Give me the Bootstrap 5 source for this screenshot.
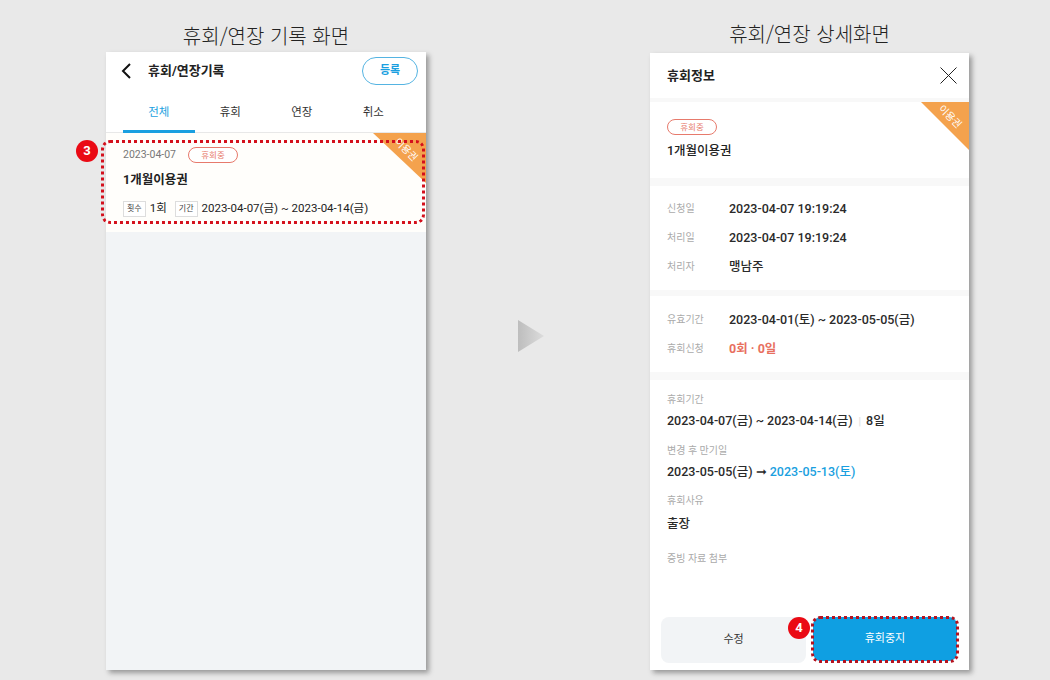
<!DOCTYPE html>
<html lang="ko">
<head>
    <meta charset="UTF-8">
    <meta name="viewport" content="width=device-width, initial-scale=1.0">
    <title>휴회/연장 화면</title>
    <link href="https://cdn.jsdelivr.net/npm/bootstrap@5.3.0/dist/css/bootstrap.min.css" rel="stylesheet">
    <style>
        html, body { height: 680px; overflow: hidden; }
        body { background: #e9e9e9; color: #222; font-family: Roboto, "Noto Sans CJK KR", sans-serif; font-size: 12px; }
        .stage { height: 680px; }
        .left-col { width: 320px; margin-left: 106px; }
        .arrow-col { width: 26px; margin-left: 92px; height: 680px; padding-top: 320px; }
        .right-col { width: 319px; margin-left: 106px; }
        .screen-title { font-family: "Noto Sans CJK KR", sans-serif; font-size: 20px; font-weight: 300; color: #222; text-align: center; line-height: 30px; white-space: nowrap; }
        .left-col .screen-title { height: 52px; padding-top: 21px; line-height: 30px; }
        .right-col .screen-title { height: 53px; padding-top: 19px; line-height: 30px; }
        .phone { background: #fff; box-shadow: 3px 3px 5px rgba(0,0,0,.35); position: relative; }
        .left-col .phone { height: 618px; background: #f2f4f6; }
        .right-col .phone { height: 617px; }

        .list-head { height: 38px; background: #fff; padding-left: 15px; padding-right: 8px; }
        .head-title { font-size: 13px; font-weight: 700; color: #222; margin-left: 17px; padding-top: 0; }
        .reg-btn { width: 56px; height: 28px; border: 1px solid #55b4e2; border-radius: 14px; color: #1a9fe0; font-size: 11px; font-weight: 700; background: #fff; padding: 0; }
        .tab-row { height: 43px; background: #fff; padding-left: 17px; padding-right: 17px; border-bottom: 1px solid #e8e8e8; }
        .tab-item { width: 71.5px; text-align: center; font-size: 11.5px; color: #333; line-height: 18px; padding-top: 13px; height: 43px; }
        .tab-item.on { color: #1a9fe0; border-bottom: 3px solid #1a9fe0; }
        .rec-card { height: 99px; background: #fffefb; padding: 14px 17px 0; position: relative; overflow: hidden; }
        .rec-date { font-size: 10.5px; color: #777; }
        .pill { display: inline-block; width: 50px; height: 16px; border: 1px solid #e77a6c; border-radius: 8px; color: #e77a6c; font-size: 8.5px; line-height: 14px; text-align: center; background: #fff; }
        .rec-name { font-size: 12.5px; font-weight: 700; margin-top: 8px; line-height: 18px; }
        .rec-meta { margin-top: 11px; font-size: 11.5px; }
        .tag-box { display: inline-block; height: 16px; line-height: 14px; border: 1px solid #ddd; color: #444; font-size: 8px; padding: 0 3px; background: #fff; }
        .ribbon { position: absolute; top: 0; right: 0; width: 53px; height: 50px; background: #f4a24d; clip-path: polygon(0 0, 100% 0, 100% 100%); }
        .ribbon-text { position: absolute; top: 10px; right: -2px; width: 44px; text-align: center; transform: rotate(45deg); color: #fff; font-size: 10px; line-height: 14px; }
        .dot-frame { position: absolute; left: -5px; top: 88px; width: 324px; height: 84px; border: 3px dotted #d4101c; border-radius: 9px; pointer-events: none; }
        .num-dot { position: absolute; width: 22px; height: 22px; border-radius: 50%; background: #ea0a14; color: #fff; font-size: 13px; font-weight: 700; line-height: 22px; text-align: center; }
        .num-three { left: -30px; top: 88px; }

        .detail-head { height: 45px; padding: 0 12px 0 17px; }
        .detail-title { font-size: 13px; font-weight: 700; }
        .gap-band { background: #f8f8f8; }
        .band-a { height: 4px; }
        .band-b { height: 8px; }
        .band-c { height: 6px; }
        .sec-one { height: 76px; padding: 17px 17px 0; position: relative; }
        .ribbon-big { width: 48px; height: 48px; }
        .ribbon-big .ribbon-text { top: 8px; right: -3px; }
        .sec-name { font-size: 12.5px; font-weight: 500; margin-top: 7px; line-height: 18px; }
        .sec-rows { padding: 0 17px; }
        .info-row { height: 29px; line-height: 29px; }
        .info-label { width: 62px; color: #aaa; font-size: 10px; flex: none; }
        .info-value { font-size: 12.5px; font-weight: 500; color: #2a2a2a; }
        .sec-two { height: 104px; padding-top: 8px; }
        .sec-three { height: 76px; padding-top: 9px; }
        .red-val { color: #e8705f; font-weight: 700; }
        .sec-four { height: 230px; padding: 11px 17px 0; }
        .stack-label { color: #aaa; font-size: 10px; line-height: 18px; }
        .stack-value { font-size: 12.5px; font-weight: 500; color: #2a2a2a; line-height: 20px; margin-top: 2px; margin-bottom: 10px; }
        .blue-val { color: #1a9fe0; }
        .bar-sep { color: #ddd; font-size: 10px; margin: 0 5px 0 6px; }
        .foot-btns { position: absolute; left: 11px; bottom: 7px; gap: 7px; }
        .btn-edit { width: 145px; height: 46px; background: #f2f4f6; border: 0; border-radius: 8px; font-size: 11px; color: #333; padding: 0; }
        .btn-stop { width: 144px; height: 44px; background: #0f9fe2; border: 0; border-radius: 8px; font-size: 11px; color: #fff; padding: 0; margin-right: 0; }
        .dot-frame-two { position: absolute; left: 161px; top: 563px; width: 148px; height: 47px; border: 3px dotted #b5121f; border-radius: 9px; pointer-events: none; }
        .num-four { left: 138px; top: 564px; }
    </style>
</head>
<body>
    <div class="stage d-flex align-items-start">
        <!-- 기록 화면 -->
        <div class="left-col">
            <div class="screen-title">휴회/연장 기록 화면</div>
            <div class="phone">
                <div class="list-head d-flex align-items-center">
                    <svg width="10" height="16" viewBox="0 0 10 16"><path d="M9 1 2 8l7 7" fill="none" stroke="#111" stroke-width="2"/></svg>
                    <div class="head-title">휴회/연장기록</div>
                    <button class="reg-btn ms-auto">등록</button>
                </div>
                <div class="tab-row d-flex">
                    <div class="tab-item on">전체</div>
                    <div class="tab-item">휴회</div>
                    <div class="tab-item">연장</div>
                    <div class="tab-item">취소</div>
                </div>
                <div class="rec-card">
                    <div class="d-flex align-items-center gap-2">
                        <span class="rec-date me-1">2023-04-07</span>
                        <span class="pill">휴회중</span>
                    </div>
                    <div class="rec-name">1개월이용권</div>
                    <div class="rec-meta d-flex align-items-center">
                        <span class="tag-box me-1">횟수</span>
                        <span>1회</span>
                        <span class="tag-box ms-2 me-1">기간</span>
                        <span>2023-04-07(금) ~ 2023-04-14(금)</span>
                    </div>
                    <div class="ribbon"><div class="ribbon-text">이용권</div></div>
                </div>
                <div class="dot-frame"></div>
                <div class="num-dot num-three">3</div>
            </div>
        </div>

        <div class="arrow-col">
            <svg width="26" height="32" viewBox="0 0 26 32">
                <defs>
                    <linearGradient id="arrowFill" x1="0" x2="1" y1="0" y2="0">
                        <stop offset="0" stop-color="#bdbdbd"/>
                        <stop offset="1" stop-color="#dcdcdc"/>
                    </linearGradient>
                </defs>
                <polygon points="0,0 26,16 0,32" fill="url(#arrowFill)"/>
            </svg>
        </div>

        <!-- 상세 화면 -->
        <div class="right-col">
            <div class="screen-title">휴회/연장 상세화면</div>
            <div class="phone">
                <div class="detail-head d-flex align-items-center justify-content-between">
                    <div class="detail-title">휴회정보</div>
                    <svg width="17" height="17" viewBox="0 0 17 17"><path d="M.5.5l16 16M16.500.5l-16 16" fill="none" stroke="#222" stroke-width="1"/></svg>
                </div>
                <div class="gap-band band-a"></div>
                <div class="sec-one">
                    <span class="pill d-block">휴회중</span>
                    <div class="sec-name">1개월이용권</div>
                    <div class="ribbon ribbon-big"><div class="ribbon-text">이용권</div></div>
                </div>
                <div class="gap-band band-b"></div>
                <div class="sec-rows sec-two">
                    <div class="info-row d-flex"><span class="info-label">신청일</span><span class="info-value">2023-04-07 19:19:24</span></div>
                    <div class="info-row d-flex"><span class="info-label">처리일</span><span class="info-value">2023-04-07 19:19:24</span></div>
                    <div class="info-row d-flex"><span class="info-label">처리자</span><span class="info-value">맹남주</span></div>
                </div>
                <div class="gap-band band-c"></div>
                <div class="sec-rows sec-three">
                    <div class="info-row d-flex"><span class="info-label">유효기간</span><span class="info-value">2023-04-01(토) ~ 2023-05-05(금)</span></div>
                    <div class="info-row d-flex"><span class="info-label">휴회신청</span><span class="info-value red-val">0회 · 0일</span></div>
                </div>
                <div class="gap-band band-b"></div>
                <div class="sec-four">
                    <div class="stack-label">휴회기간</div>
                    <div class="stack-value">2023-04-07(금) ~ 2023-04-14(금)<span class="bar-sep">|</span>8일</div>
                    <div class="stack-label">변경 후 만기일</div>
                    <div class="stack-value">2023-05-05(금) ➞ <span class="blue-val">2023-05-13(토)</span></div>
                    <div class="stack-label">휴회사유</div>
                    <div class="stack-value mt-1 mb-3">출장</div>
                    <div class="stack-label">증빙 자료 첨부</div>
                </div>
                <div class="foot-btns d-flex align-items-start">
                    <button class="btn-edit">수정</button>
                    <button class="btn-stop">휴회중지</button>
                </div>
                <div class="dot-frame-two"></div>
                <div class="num-dot num-four">4</div>
            </div>
        </div>
    </div>
    <script src="https://cdn.jsdelivr.net/npm/bootstrap@5.3.0/dist/js/bootstrap.bundle.min.js"></script>
</body>
</html>
